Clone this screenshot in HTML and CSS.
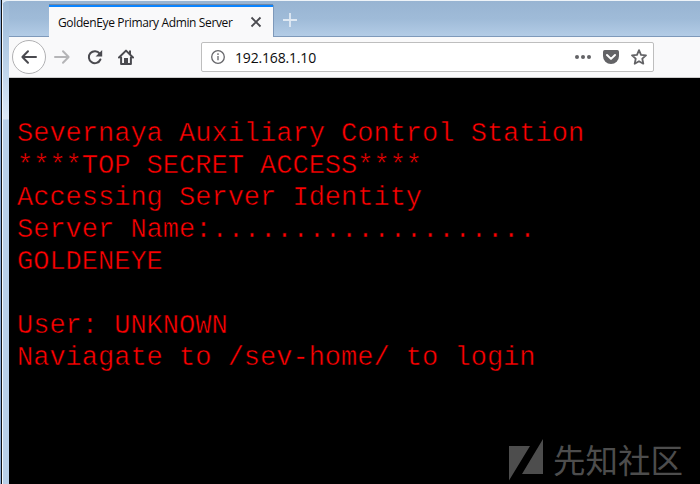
FILE: index.html
```
<!DOCTYPE html>
<html lang="en">
<head>
<meta charset="utf-8">
<title>GoldenEye Primary Admin Server</title>
<link rel="stylesheet" href="styles.css">
</head>
<body>
<div class="desktop"></div>
<div class="window">
  <div class="tabs">
    <div class="tab"><span class="tab-title">GoldenEye Primary Admin Server</span>
      <svg class="close" width="12" height="12" viewBox="0 0 12 12"><path d="M1.5 1.5l9 9M10.5 1.5l-9 9"/></svg>
    </div>
    <svg class="plus" width="14" height="14" viewBox="0 0 14 14"><path d="M7 0v14M0 7h14"/></svg>
  </div>
  <div class="toolbar">
    <span class="back"><svg class="ic" width="16" height="16" viewBox="0 0 16 16"><path d="M15 8H2M7 2.2L1.4 8 7 13.8"/></svg></span>
    <svg class="ic forward" width="16" height="16" viewBox="0 0 16 16"><path d="M1 8h13M9 2.2L14.6 8 9 13.8"/></svg>
    <svg class="ic reload" width="16" height="16" viewBox="0 0 16 16"><path d="M12.7 4.6A6 6 0 1 0 13.4 10.5"/><path class="solid" d="M15.2 1v6.6H8.6z"/></svg>
    <svg class="ic home" width="16" height="16" viewBox="0 0 16 16"><path d="M1 8.5L8 1.6l7 6.9M3.1 8.5V14.9h9.8V8.5"/><path class="solid" d="M6 9h4v6H6zM11 1.5h2v4h-2z"/></svg>
    <div class="urlbar">
      <svg class="info" width="14" height="14" viewBox="0 0 14 14"><circle cx="7" cy="7" r="6.3"/><path d="M7 6v4.3M7 3.3v1.6"/></svg>
      <span class="url">192.168.1.10</span>
      <svg class="dots" width="16" height="4" viewBox="0 0 16 4"><circle cx="2" cy="2" r="2"/><circle cx="8" cy="2" r="2"/><circle cx="14" cy="2" r="2"/></svg>
      <svg class="pocket" width="16" height="14" viewBox="0 0 16 14"><path class="shield" d="M1.7 0h12.6Q16 0 16 1.7V6a8 8 0 0 1-16 0V1.7Q0 0 1.7 0z"/><path class="chev" d="M4 5l4 3.9L12 5"/></svg>
      <svg class="star" width="16" height="16" viewBox="0 0 16 16"><path d="M8 1.2l2 4.6 5 .5-3.7 3.4 1 5L8 12.2l-4.300 2.5 1-5L1 6.300l5-.5z"/></svg>
    </div>
  </div>
  <main class="page">
<pre class="terminal">Severnaya Auxiliary Control Station
****TOP SECRET ACCESS****
Accessing Server Identity
Server Name:....................
GOLDENEYE

User: UNKNOWN
Naviagate to /sev-home/ to login</pre>
    <div class="watermark">
      <svg width="34" height="42" viewBox="0 0 34 42"><path d="M0 7h21L0 41.500zM34 0v35H13z"/></svg>
      <span>先知社区</span>
    </div>
  </main>
</div>
</body>
</html>
```
FILE: styles.css
```
* { box-sizing: border-box; }
body {
  margin: 0;
  width: 700px;
  height: 484px;
  overflow: hidden;
  display: flex;
  background: #dce9f5;
  font-family: "Open Sans", "Noto Sans", sans-serif;
}
svg { display: block; flex: none; fill: none; }
.desktop {
  width: 2px;
  flex: none;
  background: linear-gradient(90deg, #86aad8 1px, #111 1px);
}
.window {
  width: 698px;
  height: 484px;
  display: flex;
  flex-direction: column;
  padding-left: 7px;
  border-top: 1px solid #eef3f8;
  border-top-left-radius: 6px;
  background: linear-gradient(90deg, #f5faff 1px, transparent 1px),
    linear-gradient(#9bb8d5 0, #a9c4df 30px, #d5e5f5 108px, #dce9f7 118px, #b7cfe8 119px);
}
.tabs {
  height: 36px;
  display: flex;
  align-items: flex-end;
  flex: none;
  padding-left: 40px;
  background: linear-gradient(#98b4d2, #9fbbd8 18px, #b3cce6);
  border-bottom: 1px solid #7e99ba;
}
.tab {
  width: 224px;
  height: 32px;
  margin-bottom: -1px;
  display: flex;
  align-items: center;
  padding: 0 11px 0 9px;
  background: #f9f9fa;
  border-top: 2px solid #0a84ff;
  box-shadow: 0 -1px #7188a5, 1px 0 #7e99ba;
}
.tab-title {
  width: 192px;
  font-size: 12px;
  letter-spacing: -0.36px;
  color: #0c0c0d;
  white-space: nowrap;
}
.close { stroke: #4a4a4f; stroke-width: 1.8; }
.plus { margin: 0 0 9px 10px; stroke: #e0e9f3; stroke-width: 1.8; }
.toolbar {
  height: 41px;
  flex: none;
  display: flex;
  align-items: center;
  padding-left: 3px;
  background: #f9f9fa;
  border-bottom: 1px solid #ccc;
}
.back {
  width: 34px;
  height: 34px;
  display: flex;
  align-items: center;
  justify-content: center;
  border: 1px solid #b1b1b3;
  border-radius: 50%;
  background: #fff;
}
.ic { stroke: #4a4a4f; stroke-width: 2; stroke-linecap: round; stroke-linejoin: round; }
.solid { fill: #4a4a4f; stroke: none; }
.forward { margin-left: 8px; stroke: #b5b5b7; }
.reload { margin-left: 16.5px; }
.home { margin-left: 15.5px; }
.urlbar {
  width: 453px;
  height: 30px;
  margin-left: 67px;
  display: flex;
  align-items: center;
  padding: 0 6px 0 9px;
  border: 1px solid #bebebe;
  border-radius: 2px;
  background: #fff;
}
.info { stroke: #66666a; stroke-width: 1.3; }
.url { width: 341px; margin-left: 10px; font-size: 14px; letter-spacing: -0.17px; color: #0c0c0d; }
.dots { fill: #636366; }
.pocket { margin-left: 12px; }
.shield { fill: #636366; }
.chev { stroke: #fff; stroke-width: 2; stroke-linecap: round; stroke-linejoin: round; }
.star { margin-left: 12px; stroke: #636366; stroke-width: 1.8; stroke-linejoin: round; }
.page {
  flex: 1;
  position: relative;
  padding: 40px 0 0 8px;
  background: #000;
}
.terminal {
  margin: 0;
  color: #f00;
  font: 27px/32px "Courier New", "Liberation Mono", monospace;
  -webkit-text-stroke: 0.5px #000;
}
.watermark {
  position: absolute;
  right: 17px;
  bottom: 3px;
  height: 42px;
  display: flex;
  align-items: center;
  gap: 10px;
  color: #4d4d4d;
  font: 32.5px/38px "Noto Sans CJK SC", sans-serif;
}
.watermark span { margin-top: -3px; }
.watermark svg { fill: #4d4d4d; }
```
